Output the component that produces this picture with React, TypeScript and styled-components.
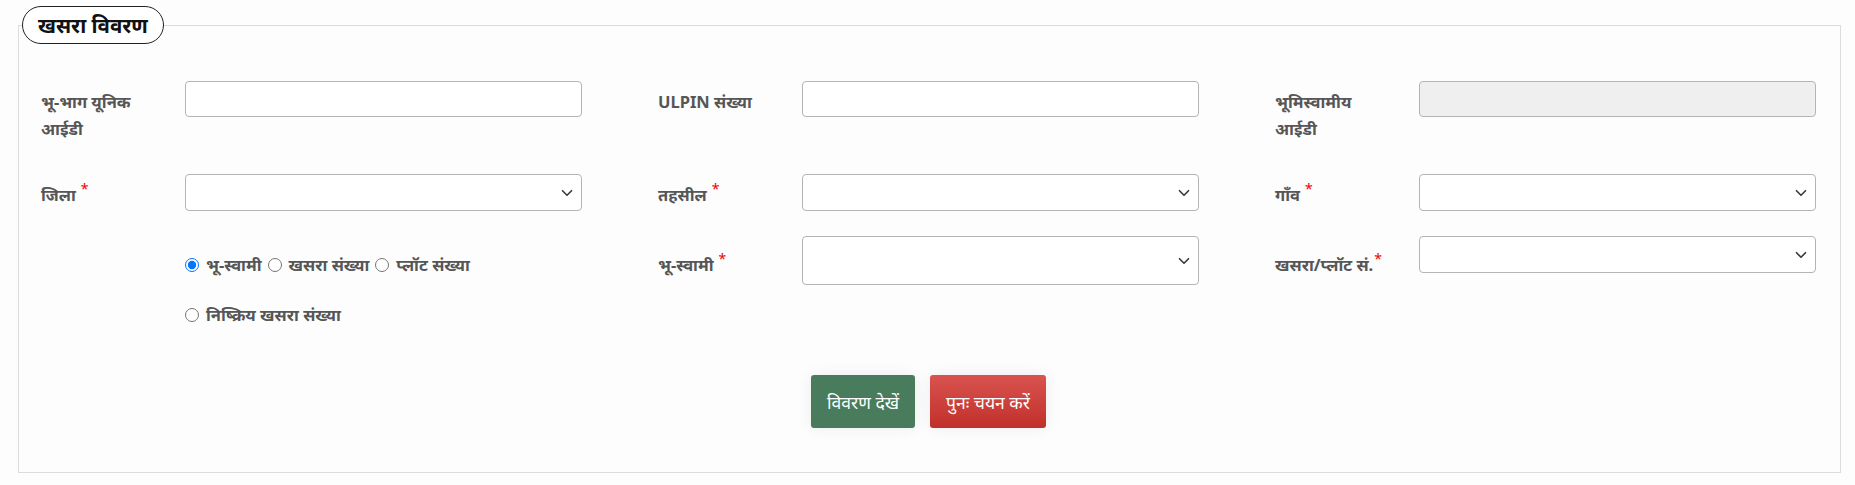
import styled, { createGlobalStyle } from 'styled-components';

const GlobalStyle = createGlobalStyle`
  body {
    margin: 0;
    background: #fcfdfc;
    font-family: "Noto Sans", "Noto Sans Devanagari", sans-serif;
  }
  * { box-sizing: border-box; }
`;

const Page = styled.div`
  padding: 6px 14px 12px 18px;
`;

const Panel = styled.fieldset`
  margin: 0;
  padding: 0 3px;
  min-width: 0;
  border: 1px solid #dcdcdc;
  background: #fdfdfd;
`;

const Legend = styled.legend`
  height: 38px;
  padding: 0 15px;
  line-height: 36px;
  border: 1px solid #222;
  border-radius: 20px;
  background: #fff;
  color: #111;
  font-size: 20.5px;
  font-weight: 700;
`;

const Body = styled.div`
  padding: 37px 21px 44px 19px;
`;

const FormGrid = styled.div`
  display: grid;
  grid-template-columns: repeat(3, 1fr);
  grid-template-rows: 67px 36px auto;
  column-gap: 76px;
  row-gap: 26px;
`;

const Field = styled.div`
  display: grid;
  grid-template-columns: 144px 1fr;
  align-items: start;
`;

const Label = styled.label<{ $drop?: number }>`
  padding-top: ${p => 7 + (p.$drop ?? 0)}px;
  color: #565656;
  font-size: 16.5px;
  font-weight: 700;
  line-height: 27px;
`;

const Star = styled.sup<{ $tight?: boolean }>`
  margin-left: ${p => (p.$tight ? 1 : 5)}px;
  color: #e00;
  font-size: 14px;
  font-weight: 400;
  vertical-align: 7px;
  line-height: 0;
`;

const TextInput = styled.input`
  width: 100%;
  height: 36px;
  padding: 0 12px;
  border: 1px solid #b4b4b4;
  border-radius: 4px;
  background: ${p => (p.disabled ? '#efefef' : '#fff')};
  font: inherit;
`;

const SelectBox = styled.div`
  position: relative;
`;

const Select = styled.select<{ $tall?: boolean }>`
  width: 100%;
  height: ${p => (p.$tall ? 49 : 37)}px;
  padding: 0 32px 0 12px;
  border: 1px solid #b4b4b4;
  border-radius: 4px;
  background: #fff;
  appearance: none;
  font: inherit;
`;

const Chevron = styled.svg`
  position: absolute;
  top: 50%;
  right: 9px;
  width: 12px;
  height: 12px;
  margin-top: -6px;
  pointer-events: none;
`;

const RadioGroup = styled.div`
  grid-column: 2;
  display: flex;
  flex-direction: column;
  gap: 23px;
  padding-top: 15px;
`;

const RadioLine = styled.div`
  display: flex;
  gap: 6px;
`;

const RadioOption = styled.label`
  display: inline-flex;
  align-items: center;
  color: #565656;
  font-size: 16.5px;
  font-weight: 700;
  line-height: 27px;

  input {
    width: 14px;
    height: 14px;
    margin: 0 7px 0 0;
  }
`;

const Actions = styled.div`
  display: flex;
  justify-content: center;
  gap: 15px;
  margin-top: 47px;
`;

const Button = styled.button<{ $tone: 'green' | 'red' }>`
  height: 53px;
  padding: 0 16px;
  border: 0;
  border-radius: 3px;
  color: #fff;
  font: inherit;
  font-size: 17.5px;
  background: ${p =>
    p.$tone === 'green' ? '#487c5c' : 'linear-gradient(#d9534f, #c1302b)'};
  box-shadow: 0 0 16px rgba(0, 0, 0, 0.07);
`;

const DropSelect = ({ tall }: { tall?: boolean }) => (
  <SelectBox>
    <Select $tall={tall} defaultValue="">
      <option value="" />
    </Select>
    <Chevron viewBox="0 0 16 16" fill="none" stroke="#343a40" strokeWidth="2.2" strokeLinecap="round" strokeLinejoin="round">
      <path d="m2 5 6 6 6-6" />
    </Chevron>
  </SelectBox>
);

export default function App() {
  return (
    <Page>
      <GlobalStyle />
      <Panel>
        <Legend>खसरा विवरण</Legend>
        <Body>
          <FormGrid>
            <Field>
              <Label>भू-भाग यूनिक<br />आईडी</Label>
              <TextInput />
            </Field>
            <Field>
              <Label>ULPIN संख्या</Label>
              <TextInput />
            </Field>
            <Field>
              <Label>भूमिस्वामीय<br />आईडी</Label>
              <TextInput disabled />
            </Field>

            <Field>
              <Label>जिला<Star>*</Star></Label>
              <DropSelect />
            </Field>
            <Field>
              <Label>तहसील<Star>*</Star></Label>
              <DropSelect />
            </Field>
            <Field>
              <Label>गाँव<Star>*</Star></Label>
              <DropSelect />
            </Field>

            <Field>
              <RadioGroup>
                <RadioLine>
                  <RadioOption><input type="radio" name="mode" defaultChecked />भू-स्वामी</RadioOption>
                  <RadioOption><input type="radio" name="mode" />खसरा संख्या</RadioOption>
                  <RadioOption><input type="radio" name="mode" />प्लॉट संख्या</RadioOption>
                </RadioLine>
                <RadioLine>
                  <RadioOption><input type="radio" name="mode" />निष्क्रिय खसरा संख्या</RadioOption>
                </RadioLine>
              </RadioGroup>
            </Field>
            <Field>
              <Label $drop={8}>भू-स्वामी<Star>*</Star></Label>
              <DropSelect tall />
            </Field>
            <Field>
              <Label $drop={8}>खसरा/प्लॉट सं.<Star $tight>*</Star></Label>
              <DropSelect />
            </Field>
          </FormGrid>

          <Actions>
            <Button $tone="green">विवरण देखें</Button>
            <Button $tone="red">पुनः चयन करें</Button>
          </Actions>
        </Body>
      </Panel>
    </Page>
  );
}
